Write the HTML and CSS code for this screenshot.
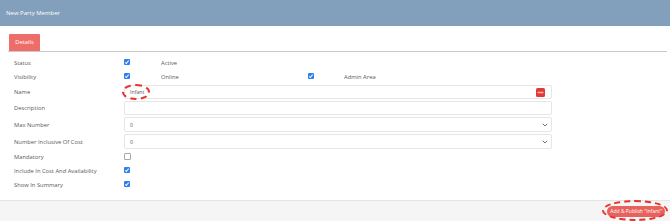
FILE: index.html
```html
<!DOCTYPE html>
<html lang="en">

<head>
    <meta charset="UTF-8">
    <meta name="viewport" content="width=device-width, initial-scale=1.0">
    <title>New Party Member</title>
    <link rel="stylesheet" href="styles.css">
</head>

<body>
    <div class="modal">
        <div class="modal-header">New Party Member</div>

        <div class="tabs">
            <div class="tab active">Details</div>
        </div>

        <div class="form">
            <div class="row check-row">
                <div class="label">Status</div>
                <div class="field">
                    <span class="option"><span class="check on"></span><span class="opt-text">Active</span></span>
                </div>
            </div>
            <div class="row check-row">
                <div class="label">Visibility</div>
                <div class="field">
                    <span class="option wide"><span class="check on"></span><span class="opt-text">Online</span></span>
                    <span class="option"><span class="check on"></span><span class="opt-text admin">Admin Area</span></span>
                </div>
            </div>
            <div class="row input-row">
                <div class="label">Name</div>
                <div class="field">
                    <div class="input">
                        <span class="value">Infant</span>
                        <span class="mark mark-name"></span>
                        <span class="pw-icon">
                            <svg width="9" height="9" viewBox="0 0 9 9">
                                <rect x="0" y="0" width="9" height="9" rx="1.5" fill="#e23a36"/>
                                <rect x="1.5" y="3.8" width="6" height="1.4" rx="0.5" fill="#f7b3b0"/>
                            </svg>
                        </span>
                    </div>
                </div>
            </div>
            <div class="row input-row">
                <div class="label">Description</div>
                <div class="field">
                    <div class="input"></div>
                </div>
            </div>
            <div class="row select-row">
                <div class="label">Max Number</div>
                <div class="field">
                    <div class="input select">
                        <span class="value">0</span>
                        <svg class="chevron" width="6" height="4" viewBox="0 0 6 4">
                            <path d="M0.8 0.8 L3 3 L5.2 0.8" fill="none" stroke="#666" stroke-width="0.9"/>
                        </svg>
                    </div>
                </div>
            </div>
            <div class="row select-row">
                <div class="label">Number Inclusive Of Cost</div>
                <div class="field">
                    <div class="input select">
                        <span class="value">0</span>
                        <svg class="chevron" width="6" height="4" viewBox="0 0 6 4">
                            <path d="M0.8 0.8 L3 3 L5.2 0.8" fill="none" stroke="#666" stroke-width="0.9"/>
                        </svg>
                    </div>
                </div>
            </div>
            <div class="row check-row">
                <div class="label">Mandatory</div>
                <div class="field">
                    <span class="check"></span>
                </div>
            </div>
            <div class="row check-row">
                <div class="label">Include In Cost And Availability</div>
                <div class="field">
                    <span class="check on"></span>
                </div>
            </div>
            <div class="row check-row">
                <div class="label">Show In Summary</div>
                <div class="field">
                    <span class="check on"></span>
                </div>
            </div>
        </div>

        <div class="modal-footer">
            <button class="publish-button">Add &amp; Publish "Infant"<span class="mark mark-button"></span></button>
        </div>
    </div>
</body>

</html>
```

FILE: styles.css
```css
:root {
    --header-color: #82a0bb;
    --accent-color: #ef6d68;
    --check-color: #2f7ff0;
    --label-color: #595959;
    --mark-color: #e8322b;
}

body {
    margin: 0;
    font-family: 'Open Sans', 'Liberation Sans', sans-serif;
    background-color: #fff;
    overflow: hidden;
}

.modal {
    width: 670px;
    height: 221px;
    display: flex;
    flex-direction: column;
}

.modal-header {
    height: 26px;
    background-color: var(--header-color);
    color: #fff;
    font-size: 6px;
    line-height: 26px;
    padding-left: 6px;
}

.tabs {
    display: flex;
    margin: 8px 3px 0 8px;
    border-bottom: 1px solid #c9c9c9;
}

.tab {
    margin-left: 1px;
    width: 31px;
    height: 17px;
    line-height: 17px;
    text-align: center;
    font-size: 5.8px;
    color: #fff;
    background-color: var(--accent-color);
    border-radius: 1px 1px 0 0;
}

.form {
    flex: 1;
    padding: 4px 0 0 14px;
}

.row {
    display: flex;
    align-items: center;
}

.check-row { height: 14px; }
.input-row { height: 16px; }
.select-row { height: 17px; }

.label {
    width: 110px;
    font-size: 5.8px;
    color: var(--label-color);
}

.field {
    display: flex;
    align-items: center;
}

.option {
    display: flex;
    align-items: center;
}

.option.wide {
    width: 184px;
}

.opt-text {
    margin-left: 31px;
    font-size: 5.8px;
    color: var(--label-color);
}

.opt-text.admin {
    margin-left: 30px;
}

.check {
    width: 5px;
    height: 5px;
    border: 0.6px solid #a8a8a8;
    border-radius: 1px;
    background-color: #fff;
    position: relative;
    top: -1px;
}

.check.on {
    width: 6px;
    height: 6px;
    border: none;
    background-color: var(--check-color);
}

.check.on::after {
    content: '';
    position: absolute;
    left: 2.2px;
    top: 0.8px;
    width: 1.3px;
    height: 2.8px;
    border: solid #fff;
    border-width: 0 0.8px 0.8px 0;
    transform: rotate(40deg);
}

.input {
    position: relative;
    width: 421px;
    height: 12px;
    border: 1px solid #e6e6e6;
    border-radius: 2px;
    display: flex;
    align-items: center;
    padding-left: 5px;
}

.select {
    height: 13px;
}

.value {
    font-size: 5.2px;
    color: #555;
}

.pw-icon {
    position: absolute;
    right: 6px;
    top: 1.5px;
    display: block;
    height: 9px;
}

.pw-icon svg {
    display: block;
}

.chevron {
    position: absolute;
    right: 3px;
    top: 5px;
}

/* red dashed annotation rings */
.mark {
    position: absolute;
    border: 2px dashed var(--mark-color);
    border-radius: 50%;
    pointer-events: none;
}

.mark-name {
    left: -3px;
    top: -2px;
    width: 24px;
    height: 12px;
}

.modal-footer {
    height: 20px;
    border-top: 1px solid #e4e4e4;
    background-color: #f5f5f5;
    display: flex;
    align-items: center;
    justify-content: flex-end;
    padding-right: 5px;
}

.publish-button {
    position: relative;
    height: 11px;
    padding: 0 3px;
    border: none;
    border-radius: 6px;
    background-color: #e8625d;
    color: #fff;
    font-family: 'Open Sans', 'Liberation Sans', sans-serif;
    font-size: 5px;
    font-weight: 500;
    line-height: 11px;
    margin-top: 1px;
}

.mark-button {
    left: -5px;
    top: -6px;
    width: 62px;
    height: 17px;
}
```
